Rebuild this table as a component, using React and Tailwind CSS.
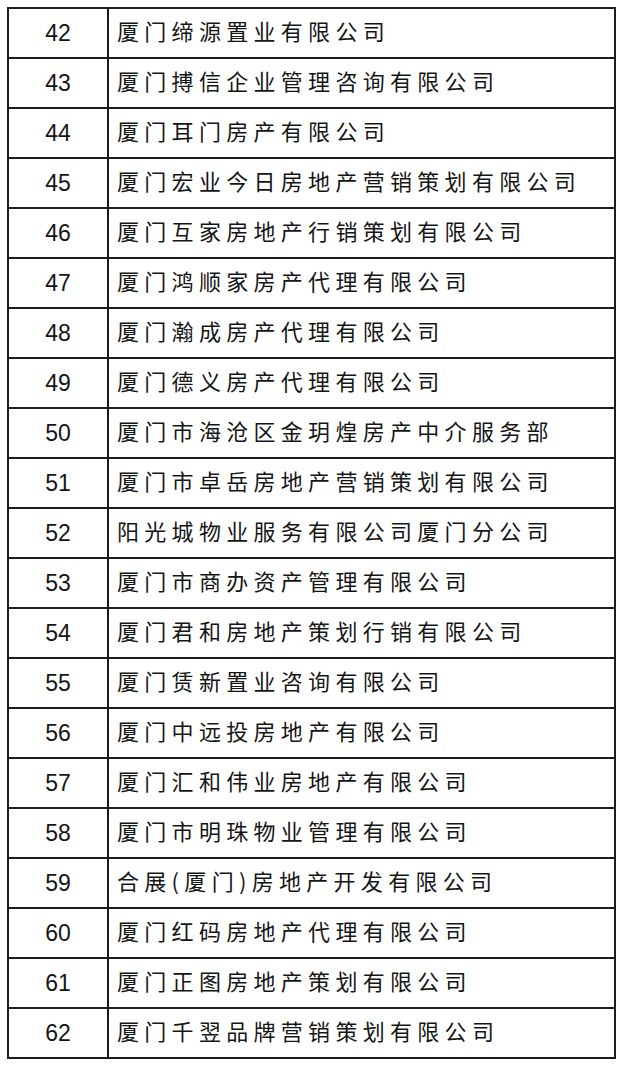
import React from "react";

const rows = [
  ["42", "厦门缔源置业有限公司"],
  ["43", "厦门搏信企业管理咨询有限公司"],
  ["44", "厦门耳门房产有限公司"],
  ["45", "厦门宏业今日房地产营销策划有限公司"],
  ["46", "厦门互家房地产行销策划有限公司"],
  ["47", "厦门鸿顺家房产代理有限公司"],
  ["48", "厦门瀚成房产代理有限公司"],
  ["49", "厦门德义房产代理有限公司"],
  ["50", "厦门市海沧区金玥煌房产中介服务部"],
  ["51", "厦门市卓岳房地产营销策划有限公司"],
  ["52", "阳光城物业服务有限公司厦门分公司"],
  ["53", "厦门市商办资产管理有限公司"],
  ["54", "厦门君和房地产策划行销有限公司"],
  ["55", "厦门赁新置业咨询有限公司"],
  ["56", "厦门中远投房地产有限公司"],
  ["57", "厦门汇和伟业房地产有限公司"],
  ["58", "厦门市明珠物业管理有限公司"],
  ["59", "合展(厦门)房地产开发有限公司"],
  ["60", "厦门红码房地产代理有限公司"],
  ["61", "厦门正图房地产策划有限公司"],
  ["62", "厦门千翌品牌营销策划有限公司"],
];

export default function App() {
  return (
    <div className="w-[625px] h-[1070px] bg-white pt-[7px] pl-[7px]">
      <div className="w-[609px] border-2 border-[#1c1c1c] border-b-0">
        {rows.map(([n, name]) => (
          <div key={n} className="flex h-[50px] border-b-2 border-[#1c1c1c]">
            <div className="w-[100px] shrink-0 border-r-2 border-[#1c1c1c] flex items-center justify-center text-[23px] text-[#151515] font-['Liberation_Sans',Arial,sans-serif]">
              {n}
            </div>
            <div className="flex-1 flex items-center pl-[8px] pb-[5px] text-[22px] tracking-[5.3px] text-[#151515] font-['Noto_Sans_CJK_SC',sans-serif] whitespace-nowrap">
              {name}
            </div>
          </div>
        ))}
      </div>
    </div>
  );
}
